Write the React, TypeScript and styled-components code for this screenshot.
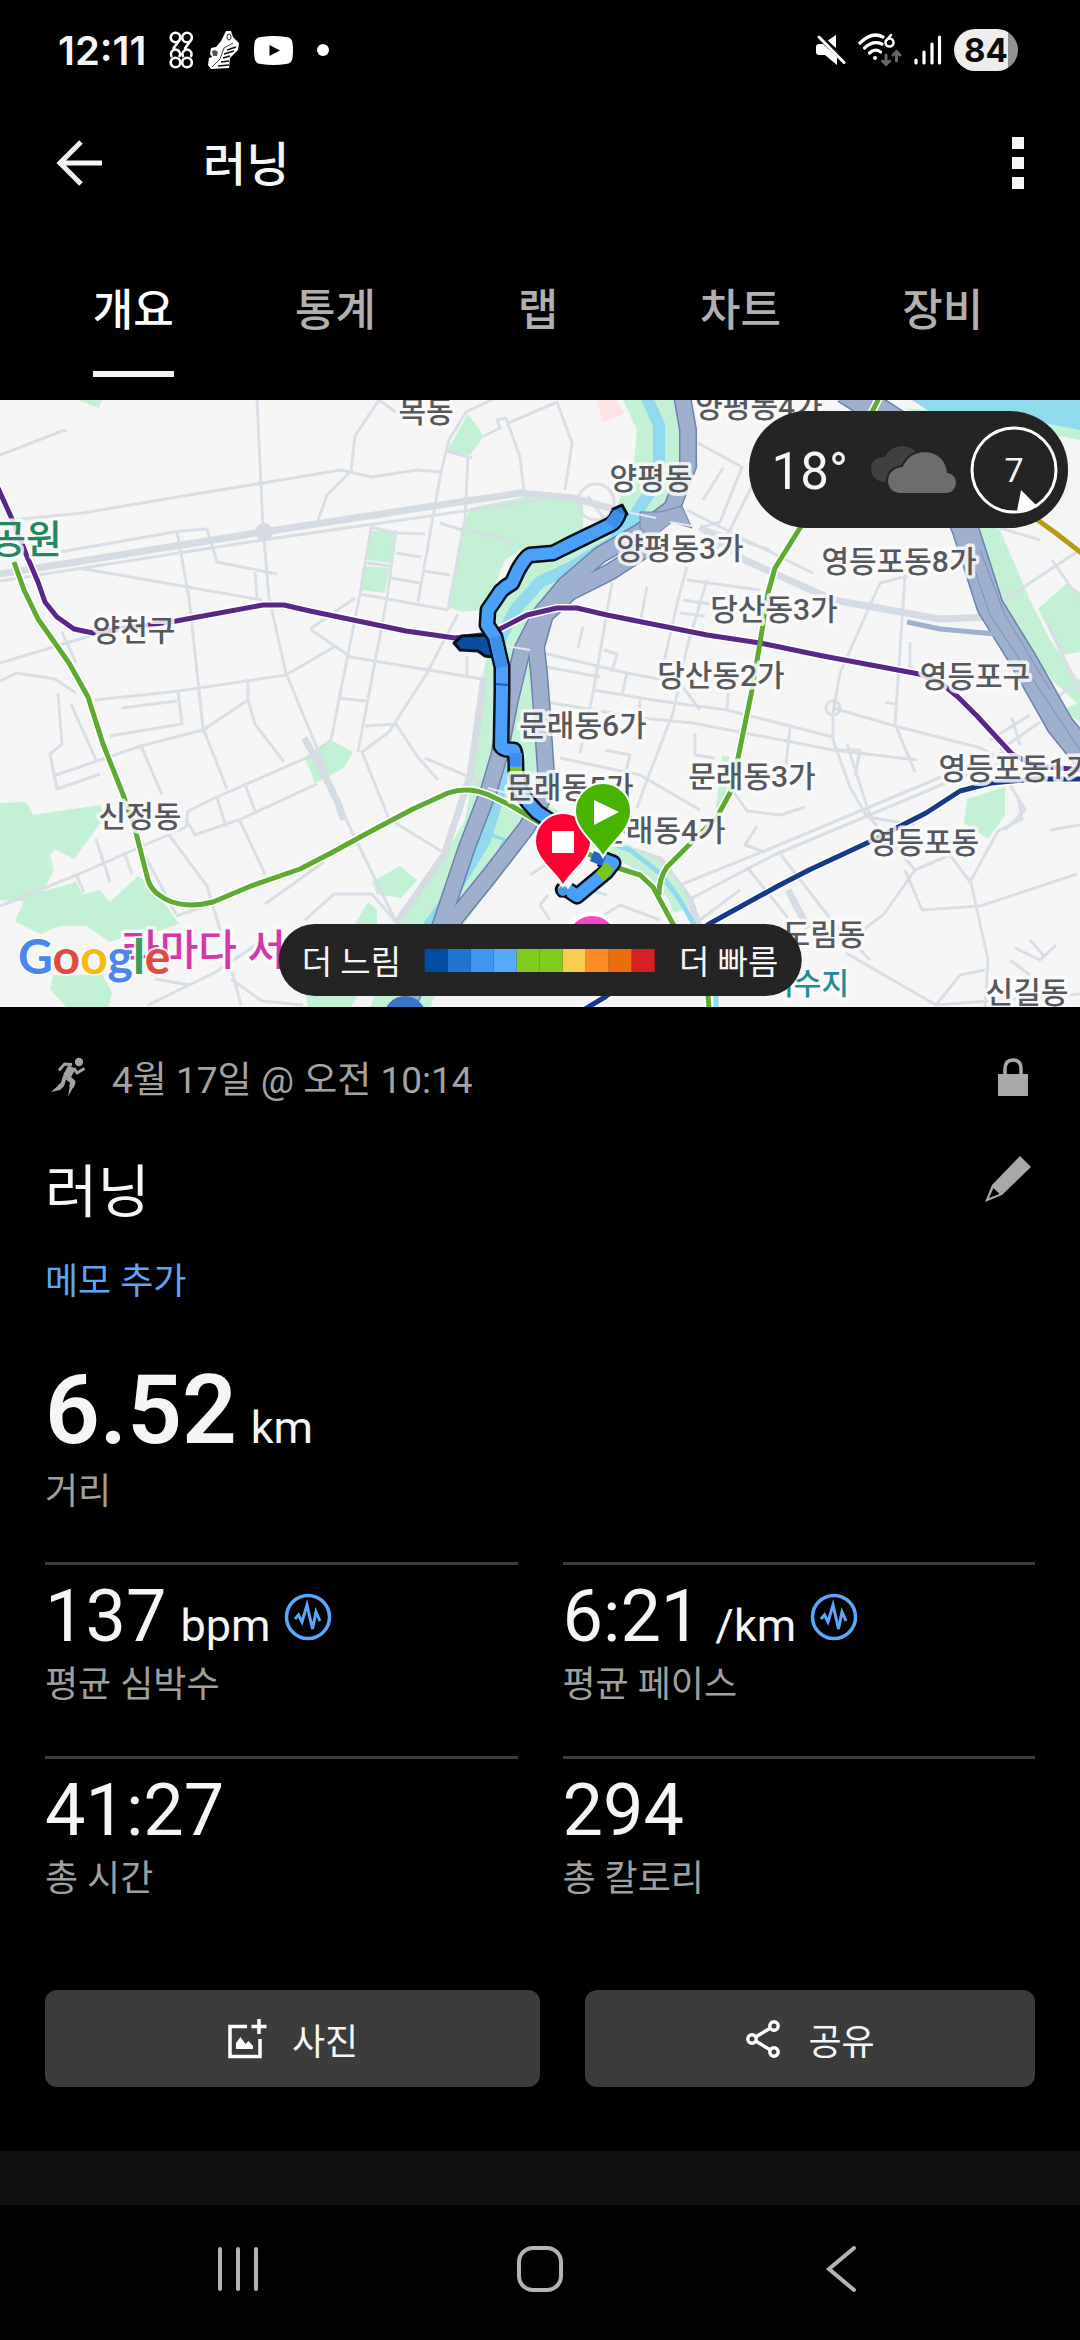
import { useState } from 'react';
import styled, { createGlobalStyle } from 'styled-components';

interface MapLabel {
  text: string;
  x: number;
  y: number;
}

interface Metric {
  label: string;
  value: string;
  unit?: string;
  wave?: boolean;
}

const TABS = ['개요', '통계', '랩', '차트', '장비'];

const METRICS: Metric[] = [
  { label: '평균 심박수', value: '137', unit: 'bpm', wave: true },
  { label: '평균 페이스', value: '6:21', unit: '/km', wave: true },
  { label: '총 시간', value: '41:27' },
  { label: '총 칼로리', value: '294' },
];

const PACE_COLORS = [
  '#004da0', '#1f76d2', '#3d97f0', '#55a9ff', '#82cb1e',
  '#82cb1e', '#f9cb4e', '#fb8c28', '#ec6c10', '#d62024',
];

const MAP_LABELS: MapLabel[] = [
  { text: '목동', x: 426, y: 22 },
  { text: '양평동4가', x: 759, y: 17 },
  { text: '양평동', x: 651, y: 89 },
  { text: '양평동3가', x: 680, y: 159 },
  { text: '영등포동8가', x: 899, y: 172 },
  { text: '당산동3가', x: 774, y: 220 },
  { text: '당산동2가', x: 721, y: 286 },
  { text: '영등포구', x: 975, y: 287 },
  { text: '문래동6가', x: 583, y: 336 },
  { text: '문래동5가', x: 570, y: 398 },
  { text: '문래동3가', x: 752, y: 387 },
  { text: '영등포동1가', x: 1016, y: 379 },
  { text: '문래동4가', x: 662, y: 441 },
  { text: '영등포동', x: 924, y: 453 },
  { text: '도림동', x: 824, y: 545 },
  { text: '신길동', x: 1027, y: 603 },
  { text: '양천구', x: 134, y: 241 },
  { text: '신정동', x: 140, y: 427 },
];

const PARKS = [
  '623,0 692,0 698,67 664,115 612,152 572,180 536,210 515,250 485,250 480,225 500,190 520,165 560,148 610,124 634,63 637,30',
  '490,240 482,280 478,320 471,350 472,380 465,420 445,455 415,500 400,525 370,608 430,608 460,530 530,430 552,380 548,300 530,250',
  '470,108 530,96 583,103 583,130 560,145 525,147 505,160 495,185 480,210 462,212 450,208 462,130',
  '370,131 393,131 396,136 390,163 367,160',
  '363,166 389,168 385,193 361,190',
  '468,14 484,36 470,55 447,51',
  '305,358 331,340 353,352 344,368 315,383',
  '372,482 400,466 417,480 401,498 377,494',
  '355,524 368,502 377,510 377,540 350,540',
  '305,592 360,592 350,608 308,608',
  '0,403 26,402 33,415 100,405 105,417 74,459 55,449 50,455 54,470 38,502 0,500',
  '15,522 26,496 76,482 83,494 100,490 110,502 138,476 155,490 179,524 155,532 138,532 110,542 86,526 59,526 41,534',
  '53,575 103,575 112,593 108,608 67,608 50,589',
  '78,0 102,0 99,8',
  '905,8 1080,26 1080,40 1000,24 925,18',
  '975,110 1000,130 1030,200 1050,240 1066,262 1080,282 1080,306 1052,280 1022,240 996,186',
  '1038,209 1067,183 1080,192 1080,252 1062,255',
  '967,399 1005,387 1005,415 988,439 964,423',
  '722,356 729,356 726,408 716,408',
  '1062,310 1080,302 1080,322',
];

const MAJOR_ROADS = [
  'M0 174 L263 132 L440 105 L520 93 L573 98 L617 110',
  'M396 524 L444 455 L470 376 L484 277',
  'M700 127 L745 160 L833 200 L940 219 L988 217',
  'M600 440 L660 460 L690 500 L700 530',
  'M304 338 L318 362 L338 403 L344 420',
  'M788 490 L808 528',
];

const ROADS = [
  'M0 121 L83 113 L189 95 L263 83 L341 70 L372 77 L417 70 L441 72',
  'M257 0 L263 127 L269 198 L286 273 L317 348 L338 403 L396 522',
  'M0 55 L62 31 L67 30',
  'M60 152 L180 131 L207 129 L217 162 L277 174',
  'M79 168 L262 200 M255 172 L257 198',
  'M0 181 L263 140 L540 100',
  'M177 131 L189 198 L203 328 L227 389',
  'M0 263 L93 235 M62 232 L76 263',
  'M0 281 L17 273 L55 279 L76 293',
  'M95 300 L179 291 L286 275 L334 247',
  'M58 293 L62 344 L50 354 L57 389 L100 374',
  'M53 376 L141 346 L203 330 L248 300 L248 279',
  'M122 308 L177 301 M110 336 L182 324 L178 291',
  'M71 304 L96 360 M141 346 L162 395',
  'M248 300 L255 324 L284 362',
  'M0 506 L79 474 L186 427 L188 411 L217 397 L306 358 L331 340',
  'M186 419 L195 435 L241 419 L317 384',
  'M217 397 L226 427 M245 384 L255 411 M239 419 L265 474',
  'M169 435 L207 486 L227 553 L241 605',
  'M138 443 L176 514 M96 439 L110 482 M124 452 L132 474 M76 474 L84 492',
  'M441 72 L418 202 M468 57 L465 119 L448 210',
  'M372 123 L360 194 L331 340 M396 130 L387 198 L358 352',
  'M370 127 L396 133 L425 134 M396 153 L421 157 M390 178 L420 183 M423 171 L450 175',
  'M360 194 L448 210 M367 163 L390 166 M338 298 L366 301',
  'M310 229 L336 247 L351 257 L482 279 M310 229 L355 198 M467 256 L467 276',
  'M458 214 L427 273 L389 332 L362 352 L389 419 L441 451',
  'M365 326 L396 324 L417 356 L438 380 M425 358 L490 386',
  'M379 0 L355 36 L351 71 L327 95 L317 123 M379 0 L396 12',
  'M447 51 L472 58 M441 72 L449 40 L466 12 L500 -4 M484 36 L500 28 L497 20 L506 18 L520 57 L524 91',
  'M265 504 L324 462 M305 520 L334 494 L372 494 L396 522',
  'M231 579 L262 601 L303 605 M148 605 L214 573 L262 541 M155 579 L190 585 M176 516 L200 508',
  'M506 24 L557 2 L572 43 L565 90',
  'M596 102 m-18 0 a18 18 0 1 0 36 0 a18 18 0 1 0 -36 0 M588 96 L612 130 M580 130 L620 118',
  'M462 130 L500 137 L513 145 M440 123 L462 130',
  'M698 43 L742 67 L720 122 L703 127 M723 68 L703 100 M755 80 L730 130 L715 150',
  'M687 110 L740 137 L813 173 M700 127 L770 150',
  'M687 167 L678 200 L660 280 M707 180 L687 247 L673 313 L647 380 L637 408',
  'M612 183 L593 293 L580 353 M647 187 L640 223 M583 227 L578 248 M604 250 L617 254 L612 272',
  'M543 253 L627 273 L680 283 L700 310 M547 267 L600 277 M627 273 L622 295',
  'M547 302 L640 318 L693 323 L833 350 L917 360 M593 290 L653 300 L727 310 L833 337',
  'M687 180 L760 190 M683 200 L710 204 M680 213 L705 216 M605 350 L630 355 L625 375 M695 333 L695 355 L715 358',
  'M560 358 L640 375 L700 410 M640 300 L636 340 M727 310 L730 270 M790 328 L785 372',
  'M880 183 L840 273 L833 313 L833 340 L850 387 L867 417 L915 425',
  'M905 174 L902 221 L895 324 L915 372 M880 183 L922 172 M885 302 L895 304 M910 242 L910 272',
  'M833 308 L895 326 L981 348 L1040 382 M833 350 L860 350 L855 376',
  'M833 308 m-7 0 a7 7 0 1 0 14 0 a7 7 0 1 0 -14 0',
  'M692 498 L774 455 L860 419 L953 380 L1022 356 M680 485 L774 447 L860 411 L953 372 L1010 350',
  'M781 455 L833 522 L870 560 M747 467 L788 518 M700 520 L740 490',
  'M733 391 L747 411 L781 415 L805 407 M757 426 L745 445 L765 452',
  'M847 344 L871 419 L915 470 L950 455 L970 482 L998 431 L1022 419 L1018 396',
  'M915 470 L884 514 L850 540 M970 478 L988 560 L985 608 M905 470 L922 510 L980 506 L1077 474',
  'M846 553 L936 605 L1080 594 M1050 430 L1080 425 M936 605 L960 575 L985 570',
  'M1010 385 L1025 410 L1005 430 M1015 548 L1040 560 L1056 545 M1010 560 L1030 575 M1030 540 L1044 556',
  'M1001 202 L1080 150 M1046 220 L1080 292 M1040 140 L1000 128 M1052 160 L1080 200 M1040 310 L1080 280',
  'M990 340 L1030 315 M1000 350 L1040 322 M1012 318 L1020 345',
  'M550 520 L540 505 L548 495 M577 532 L620 505 L660 520 M590 490 L607 495 M530 475 L550 462',
];

const HIGHWAYS = [
  'M681 -10 L688 30 L688 66 L672 108 L640 132 L600 155 L565 185 L540 215 L522 250 L510 300 L499 356 L489 390 L467 447 L441 524 L400 625',
  'M650 146 L610 172 L570 192 L545 215 L536 247 L539 273 L542 313 L546 373 L543 398 L527 427 L490 475 L452 522 L430 560',
];

const OLYMPIC_ROAD = 'M845 -10 L900 25 L940 70 L965 128 L990 206 L1022 258 L1060 325 L1090 362';

const SUBWAY = {
  purple: 'M-2 88 L12 119 L26 154 L38 182 L45 202 L57 217 L74 229 L93 233 L176 221 L263 205 L284 205 L310 211 L406 231 L455 238 L490 234 L527 215 L557 208 L577 208 L607 215 L707 235 L760 243 L823 256 L919 274 L941 283 L958 297 L977 316 L1012 354 L1036 366 L1084 370',
  green: 'M14 162 L24 190 L38 219 L69 263 L88 297 L103 344 L124 397 L136 433 L148 480 Q152 494 172 502 Q190 508 213 502 L251 486 L300 469 L331 453 L375 429 L413 409 L448 393 Q468 386 489 395 L510 405 L540 423 L580 450 L618 468 L640 475 L653 487 L673 524 Q709 560 709 612',
  branch: 'M880 -4 L872 12 L820 90 L800 128 L775 168 L768 193 L760 243 L752 290 L738 358 L730 393 L717 417 L687 447 L667 467 Q659 478 659 495',
  blue: 'M580 612 L605 597 L709 524 L778 486 L809 470 L867 443 L926 413 L960 391 L991 383 L1036 379 L1084 379',
  yellow: 'M1020 108 L1039 121 L1057 134 L1084 155',
};

const ROUTE =
  'M619 113 Q616 122 610 125 L573 143 L553 153 L530 155 Q526 156 518 170 L512 183 Q505 187 501 191 L488 210 L487 225 L495 237 L502 267 L502 290 L501 346 Q503 350 514 350 Q516 352 516 373 L520 390 L528 402 L537 412 L552 422 M600 458 L613 463 L606 472 L577 496 L568 490';

const GlobalStyle = createGlobalStyle`
  * { box-sizing: border-box; }

  body {
    margin: 0;
    background: #000;
    color: #f5f5f5;
    font-family: Roboto, 'Noto Sans CJK KR', sans-serif;
  }

  button {
    padding: 0;
    border: 0;
    background: none;
    color: inherit;
    font: inherit;
    cursor: pointer;
  }

  svg { display: block; flex: none; }
`;

const Page = styled.div`
  display: flex;
  flex-direction: column;
  min-height: 100vh;
  background: #000;
  overflow: hidden;
`;

const StatusBar = styled.div`
  display: flex;
  align-items: center;
  justify-content: space-between;
  height: 100px;
  padding: 0 62px 0 58px;
`;

const StatusGroup = styled.div<{ $gap: number }>`
  display: flex;
  align-items: center;
  gap: ${({ $gap }) => $gap}px;
`;

const Clock = styled.span`
  margin-right: 8px;
  font-family: Inter, sans-serif;
  font-size: 40px;
  font-weight: 600;
`;

const Battery = styled.span`
  display: flex;
  align-items: center;
  justify-content: center;
  width: 64px;
  height: 42px;
  border-radius: 21px;
  background: linear-gradient(to right, #ededed 84%, #929292 84%);
  color: #0c0c0c;
  font-family: Inter, sans-serif;
  font-size: 33px;
  font-weight: 700;
`;

const Header = styled.header`
  display: flex;
  align-items: center;
  height: 126px;
  padding: 0 56px;
`;

const HeaderTitle = styled.h1`
  flex: 1;
  margin: 0 0 0 99px;
  padding-top: 3px;
  font-size: 47px;
  font-weight: 500;
  line-height: 64px;
`;

const TabBar = styled.nav`
  display: grid;
  grid-template-columns: repeat(5, 1fr);
  height: 174px;
  padding: 0 36px 23px 32px;
`;

const Tab = styled.button<{ $active: boolean }>`
  position: relative;
  justify-self: center;
  min-width: 40px;
  padding-top: 11px;
  color: ${({ $active }) => ($active ? '#ffffff' : '#b0b0b0')};
  font-size: 44px;
  font-weight: 500;

  &::after {
    content: '';
    position: absolute;
    right: 0;
    bottom: 0;
    left: 0;
    height: 6px;
    background: ${({ $active }) => ($active ? '#f2f2f2' : 'transparent')};
  }
`;

const MapPanel = styled.section`
  position: relative;
  height: 607px;
  background: #f5f5f5;
  overflow: hidden;

  > svg {
    width: 100%;
    height: 100%;
  }
`;

const MapText = styled.text<{ $size?: number; $color?: string }>`
  fill: ${({ $color }) => $color || '#55585c'};
  font-family: Roboto, 'Noto Sans CJK KR', sans-serif;
  font-size: ${({ $size }) => $size || 30}px;
  font-weight: 500;
  paint-order: stroke;
  stroke: rgba(250, 250, 250, 0.85);
  stroke-width: 7px;
  stroke-linejoin: round;
`;

const GoogleText = styled(MapText)`
  font-family: Lato, sans-serif;
  font-weight: 700;
  stroke-width: 4px;
`;

const WeatherPill = styled.div`
  position: absolute;
  top: 11px;
  right: 12px;
  display: flex;
  align-items: center;
  height: 117px;
  padding: 0 10px 0 23px;
  border-radius: 58px;
  background: #242424;
`;

const Temperature = styled.span`
  margin-right: 22px;
  padding-top: 3px;
  font-size: 51px;
`;

const Wind = styled.div`
  position: relative;
  display: flex;
  align-items: center;
  justify-content: center;
  width: 88px;
  height: 88px;
  margin-left: 12px;
  font-size: 34px;

  svg {
    position: absolute;
    inset: 0;
  }
`;

const Legend = styled.div`
  position: absolute;
  bottom: 11px;
  left: 50%;
  display: flex;
  align-items: center;
  gap: 24px;
  height: 72px;
  padding: 0 23px;
  border-radius: 36px;
  background: #242424;
  font-size: 33px;
  white-space: nowrap;
  transform: translateX(-50%);
`;

const Scale = styled.div`
  display: flex;
`;

const Swatch = styled.i<{ $color: string }>`
  width: 23px;
  height: 23px;
  background: ${({ $color }) => $color};
`;

const Summary = styled.main`
  padding: 40px 45px 64px;
`;

const DateRow = styled.div`
  display: flex;
  align-items: center;
  height: 60px;
  padding: 0 7px 0 5px;
  color: #a3a3a3;
  font-size: 37px;
`;

const DateText = styled.time`
  flex: 1;
  margin-left: 26px;
`;

const TitleRow = styled.div`
  display: flex;
  align-items: flex-start;
  justify-content: space-between;
  height: 80px;
  margin-top: 46px;
  padding-right: 4px;
`;

const ActivityTitle = styled.h2`
  margin: 0;
  font-size: 57px;
  font-weight: 400;
  line-height: 80px;
`;

const EditButton = styled.button`
  margin-top: 3px;
`;

const NoteButton = styled.button`
  display: block;
  height: 52px;
  margin-top: 23px;
  color: #5aa7f7;
  font-size: 36px;
  line-height: 52px;
`;

const Value = styled.div<{ $big?: boolean }>`
  display: flex;
  align-items: baseline;
  gap: 14px;
  height: ${({ $big }) => ($big ? 112 : 84)}px;
  font-size: ${({ $big }) => ($big ? 96 : 72)}px;
  font-weight: ${({ $big }) => ($big ? 600 : 400)};
  line-height: ${({ $big }) => ($big ? 112 : 84)}px;

  svg {
    align-self: center;
  }
`;

const Unit = styled.span`
  font-size: 45px;
  font-weight: 400;
`;

const Label = styled.div`
  color: #a0a0a0;
  font-size: 36px;
  line-height: 52px;
`;

const Distance = styled.div`
  margin-top: 46px;
`;

const MetricGrid = styled.div`
  display: grid;
  grid-template-columns: 1fr 1fr;
  column-gap: 45px;
  margin-top: 44px;
`;

const MetricCell = styled.div`
  height: 194px;
  padding-top: 10px;
  border-top: 3px solid #3c3c3c;
`;

const Actions = styled.div`
  display: flex;
  gap: 45px;
  margin-top: 40px;
`;

const ActionButton = styled.button<{ $grow: number }>`
  display: flex;
  flex: ${({ $grow }) => $grow} 1 0;
  align-items: center;
  justify-content: center;
  gap: 25px;
  height: 97px;
  border-radius: 12px;
  background: #3c3c3c;
  font-size: 36px;
`;

const Band = styled.div`
  height: 54px;
  background: #101010;
`;

const SystemNav = styled.nav`
  display: grid;
  grid-template-columns: repeat(3, 1fr);
  height: 135px;
  padding: 0 88px 8px;
  background: #020202;
`;

const NavButton = styled.button`
  display: flex;
  align-items: center;
  justify-content: center;
`;

const NotificationIcons = () => (
  <>
    <svg width="24" height="38" viewBox="0 0 24 38" fill="none" stroke="#fff" strokeWidth="2.600">
      <circle cx="6.500" cy="6.500" r="4.800" />
      <circle cx="18" cy="6.500" r="4.800" />
      <path d="M10.500 9 L4 18 M22 9 L15.500 18" />
      <circle cx="6.500" cy="31.500" r="4.800" />
      <circle cx="18" cy="31.500" r="4.800" />
      <path d="M3 26 A4.500 4.500 0 1 1 10 26 M14.500 26 A4.500 4.500 0 1 1 21.500 26" />
    </svg>
    <svg width="31" height="40" viewBox="0 0 31 40">
      <path d="M18 1 L23 1 L25 7 L31 13 L30 20 L22 28 L21 38 L3 39 L0 35 L1 28 L4 27 L2 24 L3 18 L8 17 L13 11 L16 5 Z" fill="#fff" />
      <path d="M7 20 L4 21 L5 26 L9 26 L10 22 Z" fill="#555" />
      <path d="M25 13 L16 18 L12 29 L4 37" fill="none" stroke="#444" strokeWidth="1" />
      <path d="M19 20 L28 17 M16 24 L26 21 M15 28 L22 26 M13 32 L21 31 M10 36 L21 35" fill="none" stroke="#111" strokeWidth="1.500" />
      <ellipse cx="21" cy="7" rx="2" ry="3" fill="none" stroke="#333" />
    </svg>
    <svg width="39" height="29" viewBox="0 0 39 29">
      <path d="M7 1 Q19.500 -1 32 1 Q38 1.500 38.500 7 Q39.500 14.500 38.500 22 Q38 27.500 32 28 Q19.500 30 7 28 Q1 27.500 0.500 22 Q-0.500 14.500 0.500 7 Q1 1.500 7 1 Z" fill="#fff" />
      <path d="M15.500 9 L26 14.500 L15.500 20 Z" fill="#000" />
    </svg>
  </>
);

const SystemIcons = () => (
  <>
    <svg width="30" height="30" viewBox="0 0 30 30">
      <path d="M20 0 L20 13 L11 6 Z" fill="#fff" />
      <path d="M0 12 Q0 9 3 9 L7 9 L21 22 L21 30 L9 20 L3 20 Q0 20 0 17 Z" fill="#fff" />
      <path d="M6 1 L28 23" stroke="#000" strokeWidth="2" />
      <path d="M3 2 L28 27.500" stroke="#fff" strokeWidth="3" strokeLinecap="round" />
    </svg>
    <svg width="44" height="34" viewBox="0 0 44 34" fill="none" strokeLinecap="round">
      <path d="M2 10 Q14 -2 25 4" stroke="#fff" strokeWidth="3.200" />
      <path d="M6.500 15 Q15 7 24 11" stroke="#fff" strokeWidth="3.200" />
      <path d="M11.500 20 Q17 15 22.500 19" stroke="#fff" strokeWidth="3.200" />
      <circle cx="17" cy="25" r="2" fill="#fff" />
      <circle cx="31.500" cy="9.500" r="4" stroke="#fff" strokeWidth="2.500" />
      <path d="M33 2 L28 8" stroke="#fff" strokeWidth="2.500" />
      <path d="M28 22 L28 31 M24.500 28 L28 31.500 L31.500 28 M38.500 28 L38.500 19 M35 22 L38.500 18.500 L42 22" stroke="#666" strokeWidth="3" />
    </svg>
    <svg width="28" height="30" viewBox="0 0 28 30" stroke="#fff" strokeWidth="3.200" strokeLinecap="round">
      <path d="M2 25 L2 28 M10 17 L10 28 M18 9 L18 28 M25.500 2 L25.500 28" />
    </svg>
  </>
);

const RunnerIcon = () => (
  <svg width="36" height="40" viewBox="0 0 36 40" fill="none" stroke="currentColor" strokeLinejoin="round">
    <circle cx="29" cy="5" r="4.200" fill="currentColor" stroke="none" />
    <path d="M22 10 L16.500 20" strokeWidth="8" />
    <path d="M22 7.500 L14.500 7 L9 13.500 M24 11 L27 16 L34.500 11.500" strokeWidth="2.800" />
    <path d="M17 20 L23 25 L21.500 30" strokeWidth="5" />
    <path d="M15 19 L12.500 27.500 L9 30" strokeWidth="4" />
    <path d="M11 26 L14 29 L10 33 L1 35 Z M20 28 L24 29 L18 39.500 Z" fill="currentColor" stroke="none" />
  </svg>
);

const LockIcon = () => (
  <svg width="30" height="38" viewBox="0 0 30 38" aria-label="비공개">
    <path d="M7 17 V11 Q7 2 15 2 Q23 2 23 11 V17" fill="none" stroke="#a8a8a8" strokeWidth="3.500" />
    <path d="M0 16 H30 V38 H0 Z" fill="#a8a8a8" />
  </svg>
);

const PencilIcon = () => (
  <svg width="46" height="46" viewBox="0 0 46 46">
    <path d="M35 0 L46 11 L17 39 L0 46 L7 29 Z" fill="#a8a8a8" />
    <path d="M8.500 32 L14.500 38 L4 42 Z" fill="#000" />
  </svg>
);

const WaveIcon = () => (
  <svg width="48" height="48" viewBox="0 0 48 48" fill="none" stroke="#5ba8f8">
    <circle cx="24" cy="24" r="21.500" strokeWidth="3.500" />
    <path d="M11 26 L14.500 22 L18 29 L23 12 L28.500 36 L32 19 L36 28" strokeWidth="3" />
  </svg>
);

const PhotoIcon = () => (
  <svg width="40" height="40" viewBox="0 0 40 40" fill="none" stroke="#fff" strokeWidth="3.500">
    <path d="M20 7.500 H3 V37.500 H33 V20" />
    <path d="M32 0 V15 M24.500 7.500 H39.500" />
    <path d="M9 30 V24 L13.500 18 L18.500 25 L21.500 22 L26 27 V30 Z" fill="#fff" stroke="none" />
  </svg>
);

const ShareIcon = () => (
  <svg width="38" height="40" viewBox="0 0 38 40" fill="none" stroke="#fff" strokeWidth="3.400">
    <circle cx="29" cy="7" r="4.200" />
    <circle cx="7" cy="20" r="4.200" />
    <circle cx="29" cy="33" r="4.200" />
    <path d="M10.500 18 L25.500 9 M10.500 22 L25.500 31" />
  </svg>
);

const CloudIcon = () => (
  <svg width="88" height="50" viewBox="0 0 88 50">
    <path d="M14 37 Q1 35 1 23 Q2 12 15 12 Q20 1 33 1 Q46 2 50 14 L48 37 Z" fill="#414141" />
    <path d="M30 49 Q17 48 17 35 Q18 23 32 21 Q39 6 56 6 Q75 8 78 27 Q87 29 87 38 Q86 49 75 49 Z" fill="#6d6d6d" stroke="#242424" strokeWidth="2" />
  </svg>
);

const ActivityMap = () => (
  <svg viewBox="0 0 1080 607" preserveAspectRatio="xMidYMid slice" role="img" aria-label="러닝 경로">
    <g fill="#c3f1d5">
      {PARKS.map(points => (
        <polygon key={points} points={points} />
      ))}
    </g>
    <polygon points="597,0 617,0 624,13 603,23" fill="#fde3e3" />
    <polygon points="912,0 1080,0 1080,30 1010,16 930,12" fill="#90daee" />

    {/* 안양천 */}
    <g fill="none" stroke="#90daee" strokeWidth="12">
      <path d="M646 -4 L659 25 L659 62 L648 95 L632 120 L612 143 L570 168 L540 182 L515 210 L500 240" />
      <path d="M507 365 L499 395 L485 440 L455 490 L415 545" />
    </g>
    <path d="M489 434 L505 440 L500 448" fill="none" stroke="#90daee" strokeWidth="3" />

    <g fill="none" stroke="#d8dee5" strokeWidth="3" strokeLinejoin="round">
      {ROADS.map(d => (
        <path key={d} d={d} />
      ))}
    </g>
    <g fill="none" stroke="#d5dce3" strokeWidth="7" strokeLinejoin="round">
      {MAJOR_ROADS.map(d => (
        <path key={d} d={d} />
      ))}
    </g>
    <circle cx="264" cy="132" r="9" fill="#d5dce3" />

    {/* 도림천 */}
    <path d="M540 412 L616 448 L655 470 L676 494 L682 510" fill="none" stroke="#c3f1d5" strokeWidth="18" />
    <path d="M590 436 L630 450 L660 473 L680 500 L695 526 M716 596 L716 608" fill="none" stroke="#90daee" strokeWidth="5" />

    {/* 고속화도로 */}
    <g fill="none" strokeLinejoin="round">
      {HIGHWAYS.map(d => (
        <path key={d} d={d} stroke="#6883ad" strokeWidth="18" />
      ))}
      <path d={OLYMPIC_ROAD} stroke="#6883ad" strokeWidth="28" />
      {HIGHWAYS.map(d => (
        <path key={`${d}-fill`} d={d} stroke="#9fb0cf" strokeWidth="15" />
      ))}
      <path d={OLYMPIC_ROAD} stroke="#9fb0cf" strokeWidth="25" />
      <path d="M968 150 L990 215 L1030 275 L1080 350 M980 150 L1005 215 L1050 290" stroke="#7890b8" strokeWidth="1" />
      <path d="M907 222 L940 229 L995 234" stroke="#9bb1ce" strokeWidth="5" />
    </g>
    <path d="M640 112 L660 112 L682 106 L692 128 L672 122 L652 138 L640 128 Z" fill="#9fb0cf" stroke="#6883ad" />
    <path d="M627 112 L656 118 M670 122 L692 126 M500 245 L530 250 M488 388 L510 394" stroke="#e4e8ee" strokeWidth="2" />

    {/* 지하철 노선 */}
    <g fill="none" stroke="#ffffff" strokeWidth="8">
      <path d={SUBWAY.purple} />
      <path d={SUBWAY.blue} />
      <path d={SUBWAY.green} />
      <path d={SUBWAY.branch} />
    </g>
    <g fill="none" strokeWidth="5" strokeLinejoin="round">
      <path d={SUBWAY.purple} stroke="#5a2787" />
      <path d={SUBWAY.yellow} stroke="#b89b12" />
      <path d={SUBWAY.blue} stroke="#173a86" />
      <path d={SUBWAY.green} stroke="#5faa31" />
      <path d={SUBWAY.branch} stroke="#5faa31" />
    </g>

    {/* 경로 */}
    <g fill="none" strokeLinejoin="round">
      <path d="M454 243 L462 236 L494 235 L494 257 L485 256 L478 251 L460 250 Z" fill="#0b4da0" stroke="#07101c" strokeWidth="3" />
      <path d={ROUTE} stroke="#07101c" strokeWidth="17" />
      <path d="M613 109 L622 105 L627 114 L620 122 Z" fill="#2d7dd8" stroke="#07101c" strokeWidth="3" />
      <path d={ROUTE} stroke="#4ba0fa" strokeWidth="12" />
      <path d="M495 237 L502 267 M516 353 L516 366 M619 113 L610 125" stroke="#3b8eea" strokeWidth="12" />
      <path d="M516 367 L516 373 M610 466 L600 477" stroke="#7ec41f" strokeWidth="12" />
      <path d="M592 456 L604 461" stroke="#2668bd" strokeWidth="11" />
      <path d="M496 284 L508 285" stroke="#1760b5" strokeWidth="2" />
      <path d="M559 484 Q553 490 560 496 L567 496" stroke="#07101c" strokeWidth="3" />
    </g>
    <circle cx="563" cy="491" r="5" fill="#4a95e0" />

    <g textAnchor="middle">
      {MAP_LABELS.map(({ text, x, y }) => (
        <MapText key={text} x={x} y={y}>{text}</MapText>
      ))}
    </g>
    <MapText x="62" y="153" textAnchor="end" $size={39} $color="#23875f">공원</MapText>
    <MapText x="121" y="565" $size={42} $color="#d437a9">라마다 서울</MapText>
    <MapText x="849" y="594" textAnchor="end" $color="#1f8d99">저수지</MapText>

    <circle cx="592" cy="540" r="26" fill="#f745c8" stroke="#fff" strokeWidth="4" />
    <circle cx="405" cy="617" r="21" fill="#3a74c6" />

    {/* 도착 · 출발 핀 */}
    <g stroke="#fff" strokeWidth="2">
      <path d="M563 486 C556 472 535 460 535 441 A28 28 0 0 1 591 441 C591 460 570 472 563 486 Z" fill="#ff0033" />
      <path d="M603 457 C596 443 575 431 575 411 A28 28 0 0 1 631 411 C631 431 610 443 603 457 Z" fill="#46b400" />
    </g>
    <rect x="552" y="431" width="22" height="22" fill="#fff" />
    <path d="M594 400 L619 412 L594 425 Z" fill="#fff" />

    <GoogleText x="18" y="574" $size={48}>
      <tspan fill="#4a86ee">G</tspan>
      <tspan fill="#df4b40">o</tspan>
      <tspan fill="#f3bb12">o</tspan>
      <tspan fill="#4a86ee">g</tspan>
      <tspan fill="#34a156">l</tspan>
      <tspan fill="#df4b40">e</tspan>
    </GoogleText>
  </svg>
);

const App: React.FC = () => {
  const [activeTab, setActiveTab] = useState(TABS[0]);

  return (
    <>
      <GlobalStyle />
      <Page>
        <StatusBar>
          <StatusGroup $gap={15}>
            <Clock>12:11</Clock>
            <NotificationIcons />
            <svg width="40" height="12" viewBox="0 0 40 12">
              <circle cx="15" cy="6" r="6" fill="#fff" />
            </svg>
          </StatusGroup>
          <StatusGroup $gap={12}>
            <SystemIcons />
            <Battery>84</Battery>
          </StatusGroup>
        </StatusBar>

        <Header>
          <button aria-label="뒤로">
            <svg width="48" height="48" viewBox="0 0 48 48" fill="none" stroke="#f5f5f5" strokeWidth="5">
              <path d="M25 3 L4 24 L25 45 M5 24 H46" />
            </svg>
          </button>
          <HeaderTitle>러닝</HeaderTitle>
          <button aria-label="메뉴">
            <svg width="12" height="52" viewBox="0 0 12 52" fill="#f5f5f5">
              <path d="M0 0 H12 V12 H0 Z M0 20 H12 V32 H0 Z M0 40 H12 V52 H0 Z" />
            </svg>
          </button>
        </Header>

        <TabBar>
          {TABS.map(tab => (
            <Tab key={tab} $active={tab === activeTab} onClick={() => setActiveTab(tab)}>
              {tab}
            </Tab>
          ))}
        </TabBar>

        <MapPanel>
          <ActivityMap />
          <WeatherPill>
            <Temperature>18°</Temperature>
            <CloudIcon />
            <Wind>
              <svg viewBox="0 0 88 88">
                <circle cx="44" cy="44" r="42" fill="none" stroke="#fff" strokeWidth="3" />
                <path d="M51 64 L68 81 L47 85 Z" fill="#fff" />
              </svg>
              7
            </Wind>
          </WeatherPill>
          <Legend>
            <span>더 느림</span>
            <Scale>
              {PACE_COLORS.map((color, idx) => (
                <Swatch key={idx} $color={color} />
              ))}
            </Scale>
            <span>더 빠름</span>
          </Legend>
        </MapPanel>

        <Summary>
          <DateRow>
            <RunnerIcon />
            <DateText>4월 17일 @ 오전 10:14</DateText>
            <LockIcon />
          </DateRow>
          <TitleRow>
            <ActivityTitle>러닝</ActivityTitle>
            <EditButton aria-label="편집">
              <PencilIcon />
            </EditButton>
          </TitleRow>
          <NoteButton>메모 추가</NoteButton>

          <Distance>
            <Value $big>
              6.52<Unit>km</Unit>
            </Value>
            <Label>거리</Label>
          </Distance>

          <MetricGrid>
            {METRICS.map(({ label, value, unit, wave }) => (
              <MetricCell key={label}>
                <Value>
                  {value}
                  {unit && <Unit>{unit}</Unit>}
                  {wave && <WaveIcon />}
                </Value>
                <Label>{label}</Label>
              </MetricCell>
            ))}
          </MetricGrid>

          <Actions>
            <ActionButton $grow={11}>
              <PhotoIcon />
              사진
            </ActionButton>
            <ActionButton $grow={10}>
              <ShareIcon />
              공유
            </ActionButton>
          </Actions>
        </Summary>

        <Band />
        <SystemNav>
          <NavButton aria-label="최근 앱">
            <svg width="44" height="46" viewBox="0 0 44 46" stroke="#b4b4b4" strokeWidth="4" strokeLinecap="round">
              <path d="M3 3 V43 M21 3 V43 M39 3 V43" />
            </svg>
          </NavButton>
          <NavButton aria-label="홈">
            <svg width="48" height="48" viewBox="0 0 48 48" fill="none" stroke="#b4b4b4" strokeWidth="4">
              <rect x="3" y="3" width="42" height="42" rx="14" />
            </svg>
          </NavButton>
          <NavButton aria-label="이전">
            <svg width="32" height="48" viewBox="0 0 32 48" fill="none" stroke="#b4b4b4" strokeWidth="4" strokeLinecap="round">
              <path d="M29 3 L4 24 L29 45" />
            </svg>
          </NavButton>
        </SystemNav>
      </Page>
    </>
  );
};

export default App;
